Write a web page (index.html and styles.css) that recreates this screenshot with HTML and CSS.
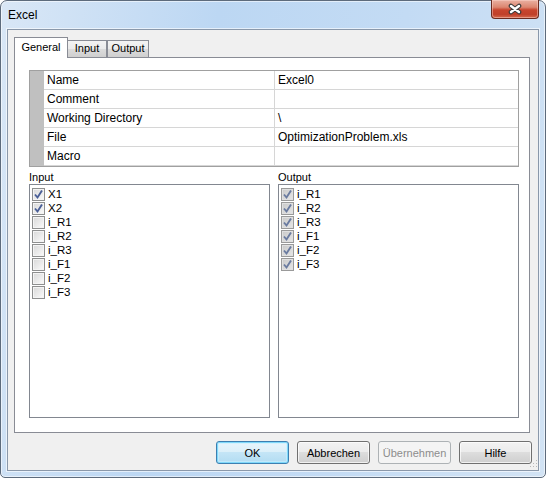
FILE: index.html
```html
<!DOCTYPE html>
<html lang="en">
<head>
  <meta charset="UTF-8">
  <title>Excel</title>
  <link rel="stylesheet" href="styles.css">
</head>
<body>
  <div class="window">
    <div class="titlebar">
      <span class="title">Excel</span>
      <div class="close">
        <svg width="46" height="17" viewBox="0 0 46 17">
          <path d="M19 6 L27 12 M27 6 L19 12" stroke="#3a3a3a" stroke-width="4.6" stroke-linecap="round" fill="none"/>
          <path d="M19 6 L27 12 M27 6 L19 12" stroke="#fff" stroke-width="2.4" stroke-linecap="round" fill="none"/>
        </svg>
      </div>
    </div>

    <div class="client">
      <div class="tabs">
        <div class="tab active">General</div>
        <div class="tab">Input</div>
        <div class="tab">Output</div>
      </div>

      <div class="page">
        <div class="props">
          <div class="gutter"></div>
          <div class="rows">
            <div class="row"><span class="key">Name</span><span class="val">Excel0</span></div>
            <div class="row"><span class="key">Comment</span><span class="val"></span></div>
            <div class="row"><span class="key">Working Directory</span><span class="val">\</span></div>
            <div class="row"><span class="key">File</span><span class="val">OptimizationProblem.xls</span></div>
            <div class="row"><span class="key">Macro</span><span class="val"></span></div>
          </div>
        </div>

        <div class="lists">
          <div class="group">
            <div class="caption">Input</div>
            <div class="list">
              <div class="item"><span class="box checked"></span>X1</div>
              <div class="item"><span class="box checked"></span>X2</div>
              <div class="item"><span class="box"></span>i_R1</div>
              <div class="item"><span class="box"></span>i_R2</div>
              <div class="item"><span class="box"></span>i_R3</div>
              <div class="item"><span class="box"></span>i_F1</div>
              <div class="item"><span class="box"></span>i_F2</div>
              <div class="item"><span class="box"></span>i_F3</div>
            </div>
          </div>
          <div class="group">
            <div class="caption">Output</div>
            <div class="list">
              <div class="item"><span class="box checked dim"></span>i_R1</div>
              <div class="item"><span class="box checked dim"></span>i_R2</div>
              <div class="item"><span class="box checked dim"></span>i_R3</div>
              <div class="item"><span class="box checked dim"></span>i_F1</div>
              <div class="item"><span class="box checked dim"></span>i_F2</div>
              <div class="item"><span class="box checked dim"></span>i_F3</div>
            </div>
          </div>
        </div>
      </div>

      <div class="buttons">
        <button class="btn default">OK</button>
        <button class="btn">Abbrechen</button>
        <button class="btn" disabled>Übernehmen</button>
        <button class="btn">Hilfe</button>
      </div>

      <svg class="grip" width="9" height="9" viewBox="0 0 9 9">
        <g fill="#b8b8b8">
          <rect x="7" y="1" width="1" height="1"/>
          <rect x="4" y="4" width="1" height="1"/>
          <rect x="7" y="4" width="1" height="1"/>
          <rect x="1" y="7" width="1" height="1"/>
          <rect x="4" y="7" width="1" height="1"/>
          <rect x="7" y="7" width="1" height="1"/>
        </g>
      </svg>
    </div>
  </div>
</body>
</html>
```

FILE: styles.css
```css
* {
  box-sizing: border-box;
}
body {
  margin: 0;
  padding: 0;
  background-color: #fff;
  font-family: "Liberation Sans", Arial, sans-serif;
  font-size: 11px;
  color: #000;
}
.window {
  width: 546px;
  height: 478px;
  border: 1px solid #5d6b7c;
  border-radius: 7px 7px 5px 5px;
  background: linear-gradient(100deg, #d9e7f6 0%, #bcd7f3 35%, #c3dbf4 65%, #d2e3f4 100%);
  box-shadow: inset 0 0 0 1px rgba(255, 255, 255, 0.55);
  display: flex;
  flex-direction: column;
  padding: 0 6px 6px 6px;
}
.titlebar {
  height: 28px;
  display: flex;
  align-items: flex-start;
  margin: 0 -6px;
  padding-left: 7px;
}
.title {
  font-size: 12px;
  line-height: 28px;
  color: #000;
}
.close {
  margin-left: auto;
  margin-right: 6px;
  margin-top: -1px;
  width: 48px;
  height: 19px;
  border: 1px solid #6b2b20;
  border-top: none;
  border-radius: 0 0 4px 4px;
  background: linear-gradient(#eab1a2 0%, #dc8670 40%, #c8452e 55%, #c0402a 80%, #d66a4e 100%);
  box-shadow: inset 0 0 0 1px rgba(255, 220, 210, 0.45);
}
.close svg {
  display: block;
}
.client {
  flex: 1;
  position: relative;
  display: flex;
  flex-direction: column;
  background-color: #f0f0f0;
  border: 1px solid #8a98aa;
  box-shadow: 0 0 0 1px rgba(255, 255, 255, 0.6);
  padding: 7px 6px 6px 6px;
}
.tabs {
  display: flex;
  align-items: flex-end;
  height: 20px;
}
.tab {
  height: 17px;
  border: 1px solid #898c95;
  border-bottom: none;
  background: linear-gradient(#f3f3f3, #ebebeb 50%, #dcdcdc 50%, #cfcfcf);
  line-height: 15px;
  text-align: center;
}
.tab:nth-child(2) {
  width: 40px;
  margin-left: -1px;
}
.tab:nth-child(3) {
  width: 42px;
  margin-left: 0;
}
.tab.active {
  width: 54px;
  height: 21px;
  margin-bottom: -1px;
  padding-top: 2px;
  background: #fff;
  position: relative;
  z-index: 1;
}
.page {
  flex: 1;
  margin-right: 2px;
  background-color: #fff;
  border: 1px solid #898c95;
  padding: 12px 10px 14px 14px;
  display: flex;
  flex-direction: column;
}
.props {
  display: flex;
  border: 1px solid #a0a0a0;
}
.gutter {
  width: 14px;
  background-color: #c0c0c0;
}
.rows {
  flex: 1;
}
.row {
  display: flex;
  height: 19px;
  border-bottom: 1px solid #d6d6d6;
  line-height: 18px;
  font-size: 12px;
}
.key {
  width: 230px;
  padding-left: 3px;
}
.val {
  flex: 1;
  padding-left: 3px;
  border-left: 1px solid #d6d6d6;
}
.lists {
  flex: 1;
  display: grid;
  grid-template-columns: 1fr 1fr;
  column-gap: 8px;
  margin-top: 3px;
}
.group {
  display: flex;
  flex-direction: column;
}
.caption {
  height: 14px;
  line-height: 14px;
}
.list {
  flex: 1;
  border: 1px solid #828790;
  padding: 2px 2px;
}
.item {
  display: flex;
  align-items: center;
  height: 14px;
  font-size: 11.5px;
}
.box {
  width: 13px;
  height: 13px;
  margin-right: 3px;
  border: 1px solid #8e8f8f;
  background: linear-gradient(135deg, #d8d8d8, #fbfbfb);
  box-shadow: inset 0 0 0 1px #f4f4f4;
}
.box.checked {
  background-image: url("data:image/svg+xml,%3Csvg xmlns='http://www.w3.org/2000/svg' width='11' height='11'%3E%3Cpath d='M2 5.5 L4.5 8.5 L9 1.5' stroke='%234a5f97' stroke-width='1.9' fill='none'/%3E%3C/svg%3E"), linear-gradient(135deg, #d8d8d8, #fbfbfb);
}
.box.dim {
  border-color: #9a9a9a;
  background-image: url("data:image/svg+xml,%3Csvg xmlns='http://www.w3.org/2000/svg' width='11' height='11'%3E%3Cpath d='M2 5.5 L4.5 8.5 L9 1.5' stroke='%236a7ba0' stroke-width='1.9' fill='none'/%3E%3C/svg%3E"), linear-gradient(135deg, #c9c9c9, #e6e6e6);
  box-shadow: inset 0 0 0 1px #e0e0e0;
}
.buttons {
  display: flex;
  justify-content: flex-end;
  gap: 8px;
  margin-top: 8px;
}
.btn {
  width: 73px;
  height: 23px;
  padding: 0;
  font-family: "Liberation Sans", Arial, sans-serif;
  font-size: 11px;
  color: #000;
  border: 1px solid #707070;
  border-radius: 3px;
  background: linear-gradient(#f2f2f2, #ebebeb 50%, #dddddd 50%, #cfcfcf);
  box-shadow: inset 0 0 0 1px rgba(255, 255, 255, 0.7);
}
.btn.default {
  border-color: #3c7fb1;
  background: linear-gradient(#e8f5fc, #dbeff9 50%, #c4e5f6 50%, #b2dcf2);
  box-shadow: inset 0 0 0 1px #7fd8fa, inset 0 0 0 2px rgba(200, 240, 255, 0.6);
}
.btn:disabled {
  color: #8d8d8d;
  border-color: #adb2b5;
  background: #f4f4f4;
  box-shadow: none;
}
.grip {
  position: absolute;
  right: 0;
  bottom: 2px;
}
```
